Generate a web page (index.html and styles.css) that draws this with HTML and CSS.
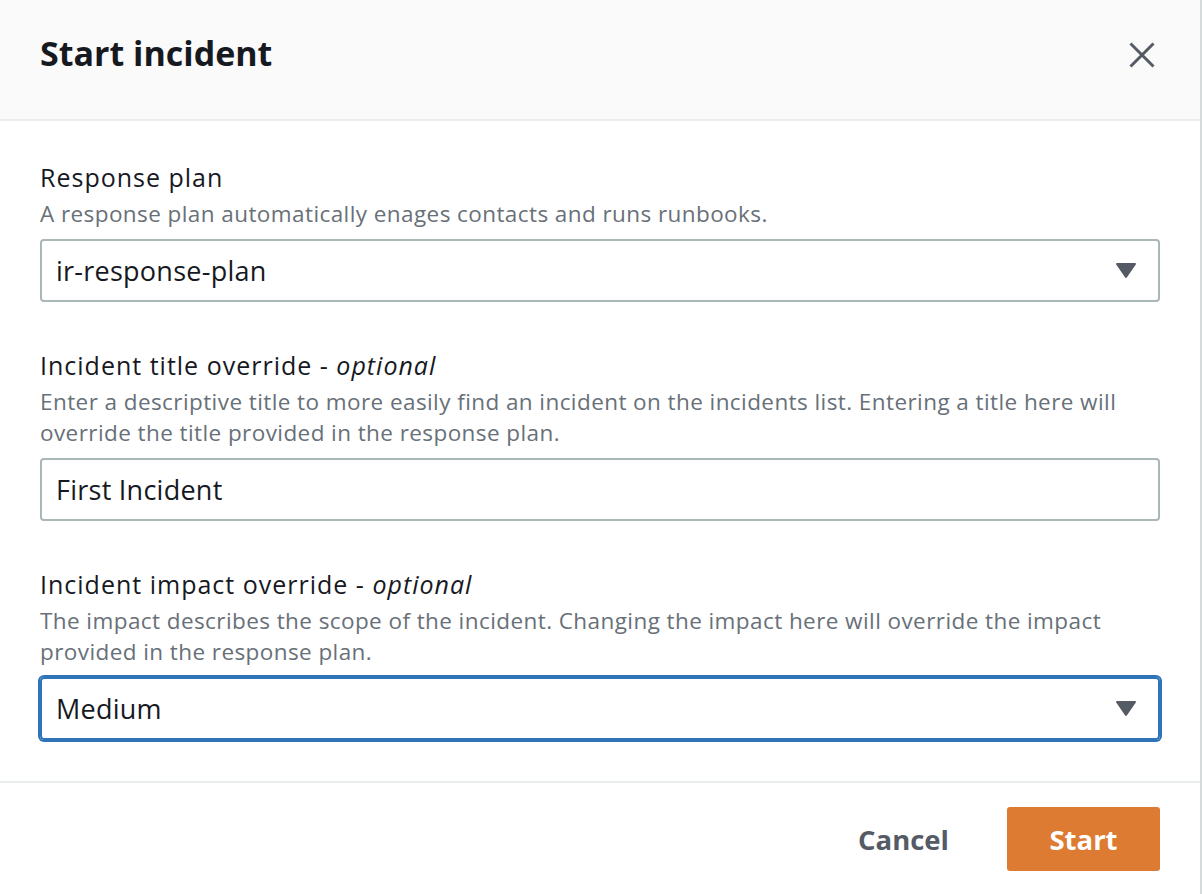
FILE: index.html
```html
<!DOCTYPE html>
<html lang="en">
<head>
<meta charset="utf-8">
<title>Start incident</title>
<link rel="stylesheet" href="styles.css">
</head>
<body>
<div class="modal">
  <div class="modal-header">
    <h1 class="modal-title">Start incident</h1>
    <button class="close-btn" aria-label="Close">
      <svg width="26" height="26" viewBox="0 0 26 26"><path d="M1.5 1.5 L24.5 24.5 M24.5 1.5 L1.5 24.5" stroke="#545b64" stroke-width="3" fill="none"/></svg>
    </button>
  </div>
  <div class="modal-body">
    <div class="field">
      <div class="label">Response plan</div>
      <div class="desc">A response plan automatically enages contacts and runs runbooks.</div>
      <div class="control select">
        <span class="value">ir-response-plan</span>
        <svg class="caret" width="22" height="17" viewBox="0 0 22 17"><path d="M2 2 H20 L11 15 Z" fill="#545b64" stroke="#545b64" stroke-width="2" stroke-linejoin="round"/></svg>
      </div>
    </div>
    <div class="field">
      <div class="label">Incident title override - <i>optional</i></div>
      <div class="desc">Enter a descriptive title to more easily find an incident on the incidents list. Entering a title here will override the title provided in the response plan.</div>
      <div class="control">
        <span class="value">First Incident</span>
      </div>
    </div>
    <div class="field">
      <div class="label">Incident impact override - <i>optional</i></div>
      <div class="desc">The impact describes the scope of the incident. Changing the impact here will override the impact provided in the response plan.</div>
      <div class="control select focused">
        <span class="value">Medium</span>
        <svg class="caret" width="22" height="17" viewBox="0 0 22 17"><path d="M2 2 H20 L11 15 Z" fill="#545b64" stroke="#545b64" stroke-width="2" stroke-linejoin="round"/></svg>
      </div>
    </div>
  </div>
  <div class="modal-footer">
    <button class="btn-link">Cancel</button>
    <button class="btn-primary">Start</button>
  </div>
</div>
</body>
</html>
```
FILE: styles.css
```css
html, body {
  margin: 0;
  padding: 0;
  background: #ffffff;
}
body {
  font-family: "Open Sans", "Noto Sans", "Liberation Sans", sans-serif;
  color: #16191f;
}
.modal {
  width: 1200px;
  height: 894px;
  border-right: 2px solid #d5dbdb;
  display: flex;
  flex-direction: column;
}
.modal-header {
  height: 86px;
  padding: 33px 45px 0 40px;
  background: #fafafa;
  border-bottom: 2px solid #eaeded;
  display: flex;
  justify-content: space-between;
  align-items: flex-start;
}
.modal-title {
  margin: 0;
  font-size: 34px;
  line-height: 40px;
  font-weight: 700;
  color: #16191f;
}
.close-btn {
  margin-top: 9px;
  padding: 0;
  border: 0;
  background: none;
  width: 26px;
  height: 26px;
  display: block;
}
.close-btn svg { display: block; }
.modal-body {
  padding: 40px 40px 41px;
  display: flex;
  flex-direction: column;
  gap: 47px;
}
.field {
  display: flex;
  flex-direction: column;
}
.label {
  font-size: 25px;
  line-height: 32px;
  letter-spacing: 1px;
  color: #16191f;
}
.label i { font-style: italic; }
.desc {
  margin-top: 5px;
  font-size: 22.5px;
  line-height: 31px;
  letter-spacing: 0.42px;
  color: #687078;
}
.control {
  margin-top: 10px;
  height: 63px;
  box-sizing: border-box;
  border: 2px solid #aab7b8;
  border-radius: 4px;
  padding: 0 21px 0 14px;
  display: flex;
  align-items: center;
  justify-content: space-between;
  font-size: 27px;
  letter-spacing: 0.25px;
  color: #16191f;
}
.control.focused {
  border-color: #2f73b8;
  box-shadow: 0 0 0 2px #2f73b8;
}
.caret { display: block; }
.modal-footer {
  border-top: 2px solid #eaeded;
  padding: 24px 40px 0 40px;
  display: flex;
  justify-content: flex-end;
  align-items: center;
  gap: 38px;
}
.btn-link {
  border: 0;
  background: none;
  font-family: inherit;
  font-size: 27.5px;
  font-weight: 700;
  color: #545b64;
  padding: 0 20px;
  height: 64px;
}
.btn-primary {
  border: 0;
  border-radius: 3px;
  background: #de7b32;
  color: #ffffff;
  font-family: inherit;
  font-size: 27.5px;
  font-weight: 700;
  width: 153px;
  height: 64px;
  padding: 0;
}
```
